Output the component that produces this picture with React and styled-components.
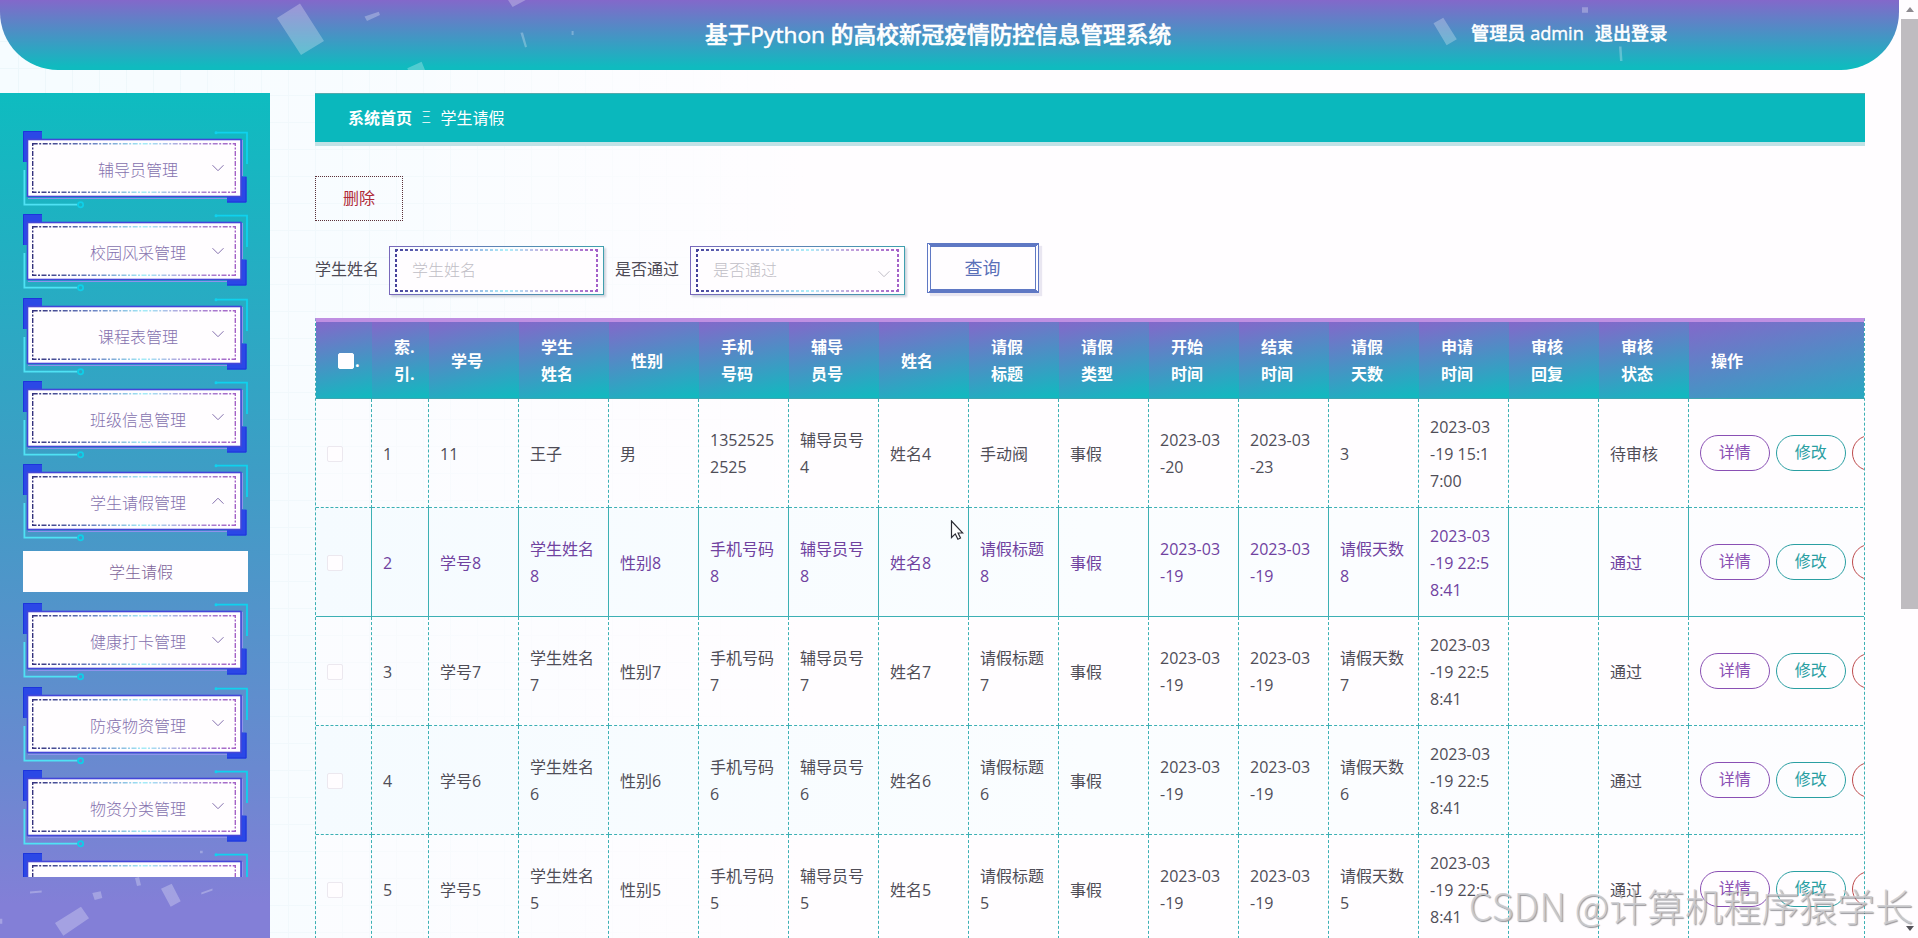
import React from "react";
import styled, { createGlobalStyle, css } from "styled-components";

const menus = [
  { name: "辅导员管理" },
  { name: "校园风采管理" },
  { name: "课程表管理" },
  { name: "班级信息管理" },
  { name: "学生请假管理", open: true, children: ["学生请假"] },
  { name: "健康打卡管理" },
  { name: "防疫物资管理" },
  { name: "物资分类管理" },
  { name: "" },
];

const headers = [
  "学号",
  "学生姓名",
  "性别",
  "手机号码",
  "辅导员号",
  "姓名",
  "请假标题",
  "请假类型",
  "开始时间",
  "结束时间",
  "请假天数",
  "申请时间",
  "审核回复",
  "审核状态",
];

const makeRow = (n) => [
  `学号${n}`,
  `学生姓名${n}`,
  `性别${n}`,
  `手机号码${n}`,
  `辅导员号${n}`,
  `姓名${n}`,
  `请假标题${n}`,
  "事假",
  "2023-03\n-19",
  "2023-03\n-19",
  `请假天数${n}`,
  "2023-03\n-19 22:5\n8:41",
  "",
  "通过",
];

const rows = [
  [
    "11",
    "王子",
    "男",
    "13525252525",
    "辅导员号4",
    "姓名4",
    "手动阀",
    "事假",
    "2023-03\n-20",
    "2023-03\n-23",
    "3",
    "2023-03\n-19 15:1\n7:00",
    "",
    "待审核",
  ],
  makeRow(8),
  makeRow(7),
  makeRow(6),
  makeRow(5),
];

const hoveredRow = 1;

function Arrow({ up }) {
  return (
    <svg width="12" height="8" viewBox="0 0 12 8" fill="none" stroke="currentColor">
      <path d={up ? "M.5 6.7 6 1.2l5.5 5.5" : "M.5 1.2 6 6.7l5.5-5.5"} />
    </svg>
  );
}

// tech style frame behind every menu entry
function Frame({ id }) {
  return (
    <FrameSvg width="226" height="79" viewBox="0 0 226 79" fill="none">
      <defs>
        <linearGradient id={id} gradientUnits="userSpaceOnUse" x1="9" y1="0" x2="213" y2="0">
          <stop offset="0" stopColor="#33307c" />
          <stop offset=".3" stopColor="#6c83c4" />
          <stop offset=".55" stopColor="#a4ecf8" />
          <stop offset=".75" stopColor="#b09ada" />
          <stop offset="1" stopColor="#a461c6" />
        </linearGradient>
      </defs>
      <path d="M0 0h19v31H0zM204 45.5h19.5v26H204z" fill="#2b48e6" />
      <path d="M.5 31V.5h18.5M204 71h19V46" stroke="#1c35dc" />
      <path d="M5 67.5h199M219.5 9v36" stroke="#8f92ec" />
      <rect x="4.5" y="8.5" width="213.5" height="57" fill="#fffdff" stroke="#4446d8" strokeWidth="1.6" />
      <rect
        x="9.7"
        y="12.7"
        width="202.6"
        height="48.6"
        stroke={`url(#${id})`}
        strokeWidth="1.4"
        strokeDasharray="5 1.5 2 1.5"
      />
      <path d="M192 1.6h32v31.5" stroke="#0fd2ee" strokeWidth="1.8" />
      <circle cx="193" cy="1.8" r="1.5" fill="#0fd2ee" />
      <path d="M1.4 39v34.6h53" stroke="#4fe2f4" strokeWidth="1.8" />
      <circle cx="57.6" cy="73.8" r="2.6" stroke="#0fcfe8" strokeWidth="1.7" />
    </FrameSvg>
  );
}

function MenuEntry({ item, index }) {
  return (
    <>
      <MenuItem>
        <Frame id={`dash${index}`} />
        <MenuText>{item.name}</MenuText>
        {item.name && (
          <MenuArrow>
            <Arrow up={item.open} />
          </MenuArrow>
        )}
      </MenuItem>
      {item.children &&
        item.children.map((child) => <SubItem key={child}>{child}</SubItem>)}
    </>
  );
}

export default function App() {
  return (
    <>
      <GlobalStyle />
      <Page>
        <Main>
          <Header>
            <Confetti width="1899" height="70" viewBox="0 0 1899 70">
              <path d="M277 18 300 3.500 324 41 301 55zM364.500 16.500 378.800 11.700 380 15 367 21zM508 0 512.600 7 525.700 0zM520.400 32.700 523 32.500 527 46.700 525 47.500zM571.600 31h2v4h-2zM407.300 68.300 421.600 61.700 425 70H408z" />
              <path d="M1433.500 23.300 1443.300 17.700 1456.800 39.300 1446.600 45.300zM1582 7.300h6v5.400h-6zM1619 46.500h2.500l1 14.500h-2.500z" />
            </Confetti>
            <Title>基于Python 的高校新冠疫情防控信息管理系统</Title>
            <UserBox>
              <span>管理员 admin</span>
              <span>退出登录</span>
            </UserBox>
          </Header>
          <Body>
            <Sidebar>
              <Confetti $bottom width="270" height="100" viewBox="0 838 270 100">
                <path d="M55 923 81 906.700 89 918.300 63.300 935.700zM92.300 893 100.700 891.300 102.300 898 94.700 900zM161 888.700 171.700 883.700 180.700 901.300 170.700 906.700zM30 891.500 41.700 890.500V892.500L30 893.500zM201.300 892.500 212.500 888.500V890.500L201.300 894.500zM135 878 139 877 141 885.300 137 886zM200 850.700h2.700v2.500H200zM0 918.700h2.300v5H0z" />
              </Confetti>
              <Menu>
                {menus.map((item, i) => (
                  <MenuEntry key={i} item={item} index={i} />
                ))}
              </Menu>
            </Sidebar>
            <Content>
              <Crumbs>
                <b>系统首页</b>
                <i>Ξ</i>
                <span>学生请假</span>
              </Crumbs>
              <DeleteButton>删除</DeleteButton>
              <SearchBar>
                <label>学生姓名</label>
                <Field>
                  <FieldInner>学生姓名</FieldInner>
                </Field>
                <label>是否通过</label>
                <Field>
                  <FieldInner>
                    是否通过
                    <Arrow />
                  </FieldInner>
                </Field>
                <QueryButton>查询</QueryButton>
              </SearchBar>
              <Table>
                <HeadRow>
                  <HeadCell>
                    <Check $head />.
                  </HeadCell>
                  <HeadCell $narrow>索.引.</HeadCell>
                  {headers.map((h) => (
                    <HeadCell key={h}>{h}</HeadCell>
                  ))}
                  <HeadCell>操作</HeadCell>
                </HeadRow>
                {rows.map((row, i) => (
                  <Row key={i} $hovered={i === hoveredRow} $striped={i % 2 === 1}>
                    <Cell>
                      <Check />
                    </Cell>
                    <Cell>{i + 1}</Cell>
                    {row.map((value, j) => (
                      <Cell key={j}>{value}</Cell>
                    ))}
                    <Cell $last>
                      <Pill $color="#8a50b4">详情</Pill>
                      <Pill $color="#2a9fa2">修改</Pill>
                      <Pill $color="#bd4a4c" />
                    </Cell>
                  </Row>
                ))}
              </Table>
            </Content>
          </Body>
        </Main>
        <Scrollbar>
          <Triangle $up />
          <Thumb />
          <Triangle />
        </Scrollbar>
        <Pointer width="14" height="22" viewBox="0 0 14 22">
          <path
            d="M1.500 1v16.500l3.800-3.600 2.600 5.300 2.600-1.200-2.400-5h4.700z"
            fill="#fff"
            stroke="#2b2b33"
            strokeWidth="1.2"
          />
        </Pointer>
        <Watermark>CSDN @计算机程序猿学长</Watermark>
      </Page>
    </>
  );
}

const GlobalStyle = createGlobalStyle`
  * {
    box-sizing: border-box;
  }
  body {
    margin: 0;
    overflow: hidden;
    font-family: "Open Sans", "Noto Sans CJK SC", sans-serif;
    font-size: 16px;
    color: #4c4a55;
  }
`;

/* pale blue grid on the left that fades out to the right */
const Page = styled.div`
  position: relative;
  display: flex;
  width: 1918px;
  height: 938px;
  overflow: hidden;
  background:
    linear-gradient(90deg, rgba(255, 253, 255, 0) 0, rgba(255, 253, 255, 0.3) 20%, #fffdff 42%),
    repeating-linear-gradient(90deg, transparent 0 18px, #edf7fb 18px 19px, transparent 19px 27px),
    repeating-linear-gradient(180deg, transparent 0 14px, #edf7fb 14px 15px, transparent 15px 27px),
    #f6fcff;
`;

const Main = styled.div`
  width: 1899px;
  height: 100%;
`;

const Header = styled.header`
  position: relative;
  display: flex;
  align-items: center;
  height: 70px;
  padding-left: 705px;
  color: #fff;
  border-radius: 0 0 58px 58px;
  overflow: hidden;
  background: linear-gradient(180deg, #8368ca 0, #0fbbbf 96%);
`;

const Confetti = styled.svg`
  position: absolute;
  left: 0;
  ${(pr) => (pr.$bottom ? "bottom: 0;" : "top: 0;")}
  fill: rgba(255, 255, 255, 0.27);
`;

const Title = styled.h1`
  margin: 0;
  width: 766px;
  font-size: 22.7px;
  font-weight: 500;
  line-height: 70px;
  white-space: nowrap;
  -webkit-text-stroke: 0.5px #fff;
`;

const UserBox = styled.div`
  display: flex;
  gap: 11px;
  height: 70px;
  font-size: 18.15px;
  font-weight: 500;
  line-height: 66px;
  white-space: nowrap;
  -webkit-text-stroke: 0.4px #fff;
`;

const Body = styled.div`
  display: flex;
  padding-top: 23px;
`;

const Sidebar = styled.aside`
  position: relative;
  width: 270px;
  height: 845px;
  padding: 38px 22px 0 23px;
  background: linear-gradient(180deg, #0ebcc0 0, #3e9dc5 45%, #6a89d0 80%, #837fd7 96%);
`;

const Menu = styled.nav`
  position: relative;
  height: 746px;
  overflow: hidden;
`;

const MenuItem = styled.div`
  position: relative;
  display: flex;
  justify-content: center;
  height: 83.25px;
  padding-left: 5px;
  color: #8571ae;
`;

const FrameSvg = styled.svg`
  position: absolute;
  left: 0;
  top: 0;
`;

const MenuText = styled.span`
  z-index: 1;
  line-height: 79px;
  font-weight: 300;
`;

const MenuArrow = styled.span`
  position: absolute;
  right: 24.5px;
  top: 32.5px;
  line-height: 0;
`;

const SubItem = styled.div`
  height: 41px;
  margin: 4px 0 11px;
  padding-left: 11px;
  line-height: 42px;
  font-weight: 300;
  text-align: center;
  color: #7d6399;
  background: #fffdff;
`;

const Content = styled.main`
  width: 1550px;
  margin-left: 45px;
`;

const Crumbs = styled.div`
  display: flex;
  align-items: center;
  gap: 10px;
  height: 49px;
  padding: 0 0 2px 33px;
  color: #fff;
  background: #0ab8bd;
  border-top: 1px solid #53a9ac;
  box-shadow: 0 4px 0 #c1e2e6;
  i {
    font-style: normal;
    font-weight: 300;
  }
`;

const DeleteButton = styled.button`
  display: block;
  width: 88px;
  height: 45px;
  margin-top: 34px;
  padding: 0 0 4px;
  border: 1px dotted #5b3038;
  background: transparent;
  color: #b02a38;
  font: inherit;
`;

const SearchBar = styled.div`
  display: flex;
  align-items: center;
  height: 50px;
  margin-top: 22px;
  label {
    width: 74px;
  }
`;

const Field = styled.div`
  width: 215px;
  height: 49px;
  margin: 5px 11px 0 0;
  padding: 2px 5px;
  border: 1px solid;
  border-image: linear-gradient(90deg, #7868bb, #3f9fae) 1;
  box-shadow: 2px 2px 2px #cdd3dc;
  & + label {
    width: 75px;
  }
`;

/* gradient edge, cut into dashes by the two repeating layers */
const FieldInner = styled.div`
  display: flex;
  justify-content: space-between;
  align-items: center;
  height: 43px;
  padding: 0 9px 3px 15px;
  color: #bfbdc6;
  font-weight: 300;
  border: 2px solid transparent;
  background:
    linear-gradient(#fffdff, #fffdff) padding-box,
    repeating-linear-gradient(90deg, transparent 0 3px, #fffdff 3px 5px) border-box,
    repeating-linear-gradient(180deg, transparent 0 3px, #fffdff 3px 5px) border-box,
    linear-gradient(90deg, #44429a, #8795d6 30%, #aef0fa 55%, #c3a6dd 75%, #a35fc8) border-box;
  svg {
    margin: 9px -2px 0 0;
  }
`;

const QueryButton = styled.button`
  width: 112px;
  height: 50px;
  margin-left: 11px;
  padding: 0 1px 2px 0;
  border: 4px double #5f78c4;
  border-top-style: solid;
  border-bottom-style: solid;
  box-shadow: 3px 3px 1px #e9e6f1;
  background: transparent;
  color: #5a70b8;
  font: inherit;
  font-size: 18px;
`;

const columns = css`
  display: grid;
  grid-template-columns: 56px 57px repeat(14, 90px) 320px;
`;

const Table = styled.div`
  width: 1550px;
  margin-top: 25px;
  border-top: 4px solid #bf8fe2;
  border-left: 1px dashed #3cb0b4;
  border-right: 1px dashed #3cb0b4;
  overflow: hidden;
`;

const HeadRow = styled.div`
  ${columns}
  width: 1693px;
  height: 77px;
  color: #fff;
  font-weight: 700;
`;

const HeadCell = styled.div`
  display: flex;
  align-items: center;
  padding: 2px ${(pr) => (pr.$narrow ? 8 : 30)}px 0 22px;
  line-height: 27px;
  word-break: break-all;
  border-bottom: 1px solid #3fa5b0;
  background: linear-gradient(168deg, #8368ca, #0fbbbf);
  &:first-child {
    padding-right: 0;
  }
`;

const line = (pr) => (pr.$hovered ? "solid" : "dashed");

const Row = styled.div`
  ${columns}
  height: 109px;
  color: ${(pr) => (pr.$hovered ? "#70429f" : "#4f4d57")};
  background: ${(pr) =>
    pr.$striped ? "linear-gradient(90deg, #f5fbff, #fafdff 50%, #fdfdff)" : "rgba(255, 253, 255, 0.4)"};
  > div {
    border-right: 1px ${line} #3cb0b4;
    border-bottom: 1px ${line} #3cb0b4;
  }
`;

const Cell = styled.div`
  display: flex;
  align-items: center;
  gap: 6.5px;
  padding: ${(pr) => (pr.$last ? "0 0 0 11px" : "2px 10px 0 11px")};
  line-height: 27px;
  white-space: pre-wrap;
  word-break: break-all;
`;

const Check = styled.span`
  width: 16px;
  height: 16px;
  border: 1px solid ${(pr) => (pr.$head ? "#fff" : "#ece8ef")};
  border-radius: 2px;
  background: #fffdff;
  margin-right: ${(pr) => (pr.$head ? 1 : 0)}px;
`;

const Pill = styled.button`
  flex: none;
  width: 69.5px;
  height: 36px;
  padding: 0 0 2px;
  border: 1px solid ${(pr) => pr.$color};
  border-radius: 18px;
  background: transparent;
  color: ${(pr) => pr.$color};
  font: inherit;
`;

const Scrollbar = styled.div`
  display: flex;
  flex-direction: column;
  align-items: center;
  width: 17px;
  height: 100%;
  margin-left: 2px;
  padding: 7px 0;
`;

const Triangle = styled.i`
  border: 4px solid transparent;
  ${(pr) =>
    pr.$up
      ? "border-top: 0; border-bottom: 5px solid #8d8a90;"
      : "margin-top: auto; border-bottom: 0; border-top: 5px solid #55535a;"}
`;

const Thumb = styled.div`
  width: 17px;
  height: 590px;
  margin-top: 7px;
  background: #bfbcc0;
`;

const Pointer = styled.svg`
  position: absolute;
  left: 950px;
  top: 520px;
`;

const Watermark = styled.div`
  position: absolute;
  right: 5px;
  bottom: 5px;
  font: 300 38px/56px "Noto Sans CJK SC", sans-serif;
  white-space: nowrap;
  color: rgba(205, 205, 208, 0.85);
  text-shadow: 1px 1px 1px rgba(110, 110, 115, 0.7);
`;
